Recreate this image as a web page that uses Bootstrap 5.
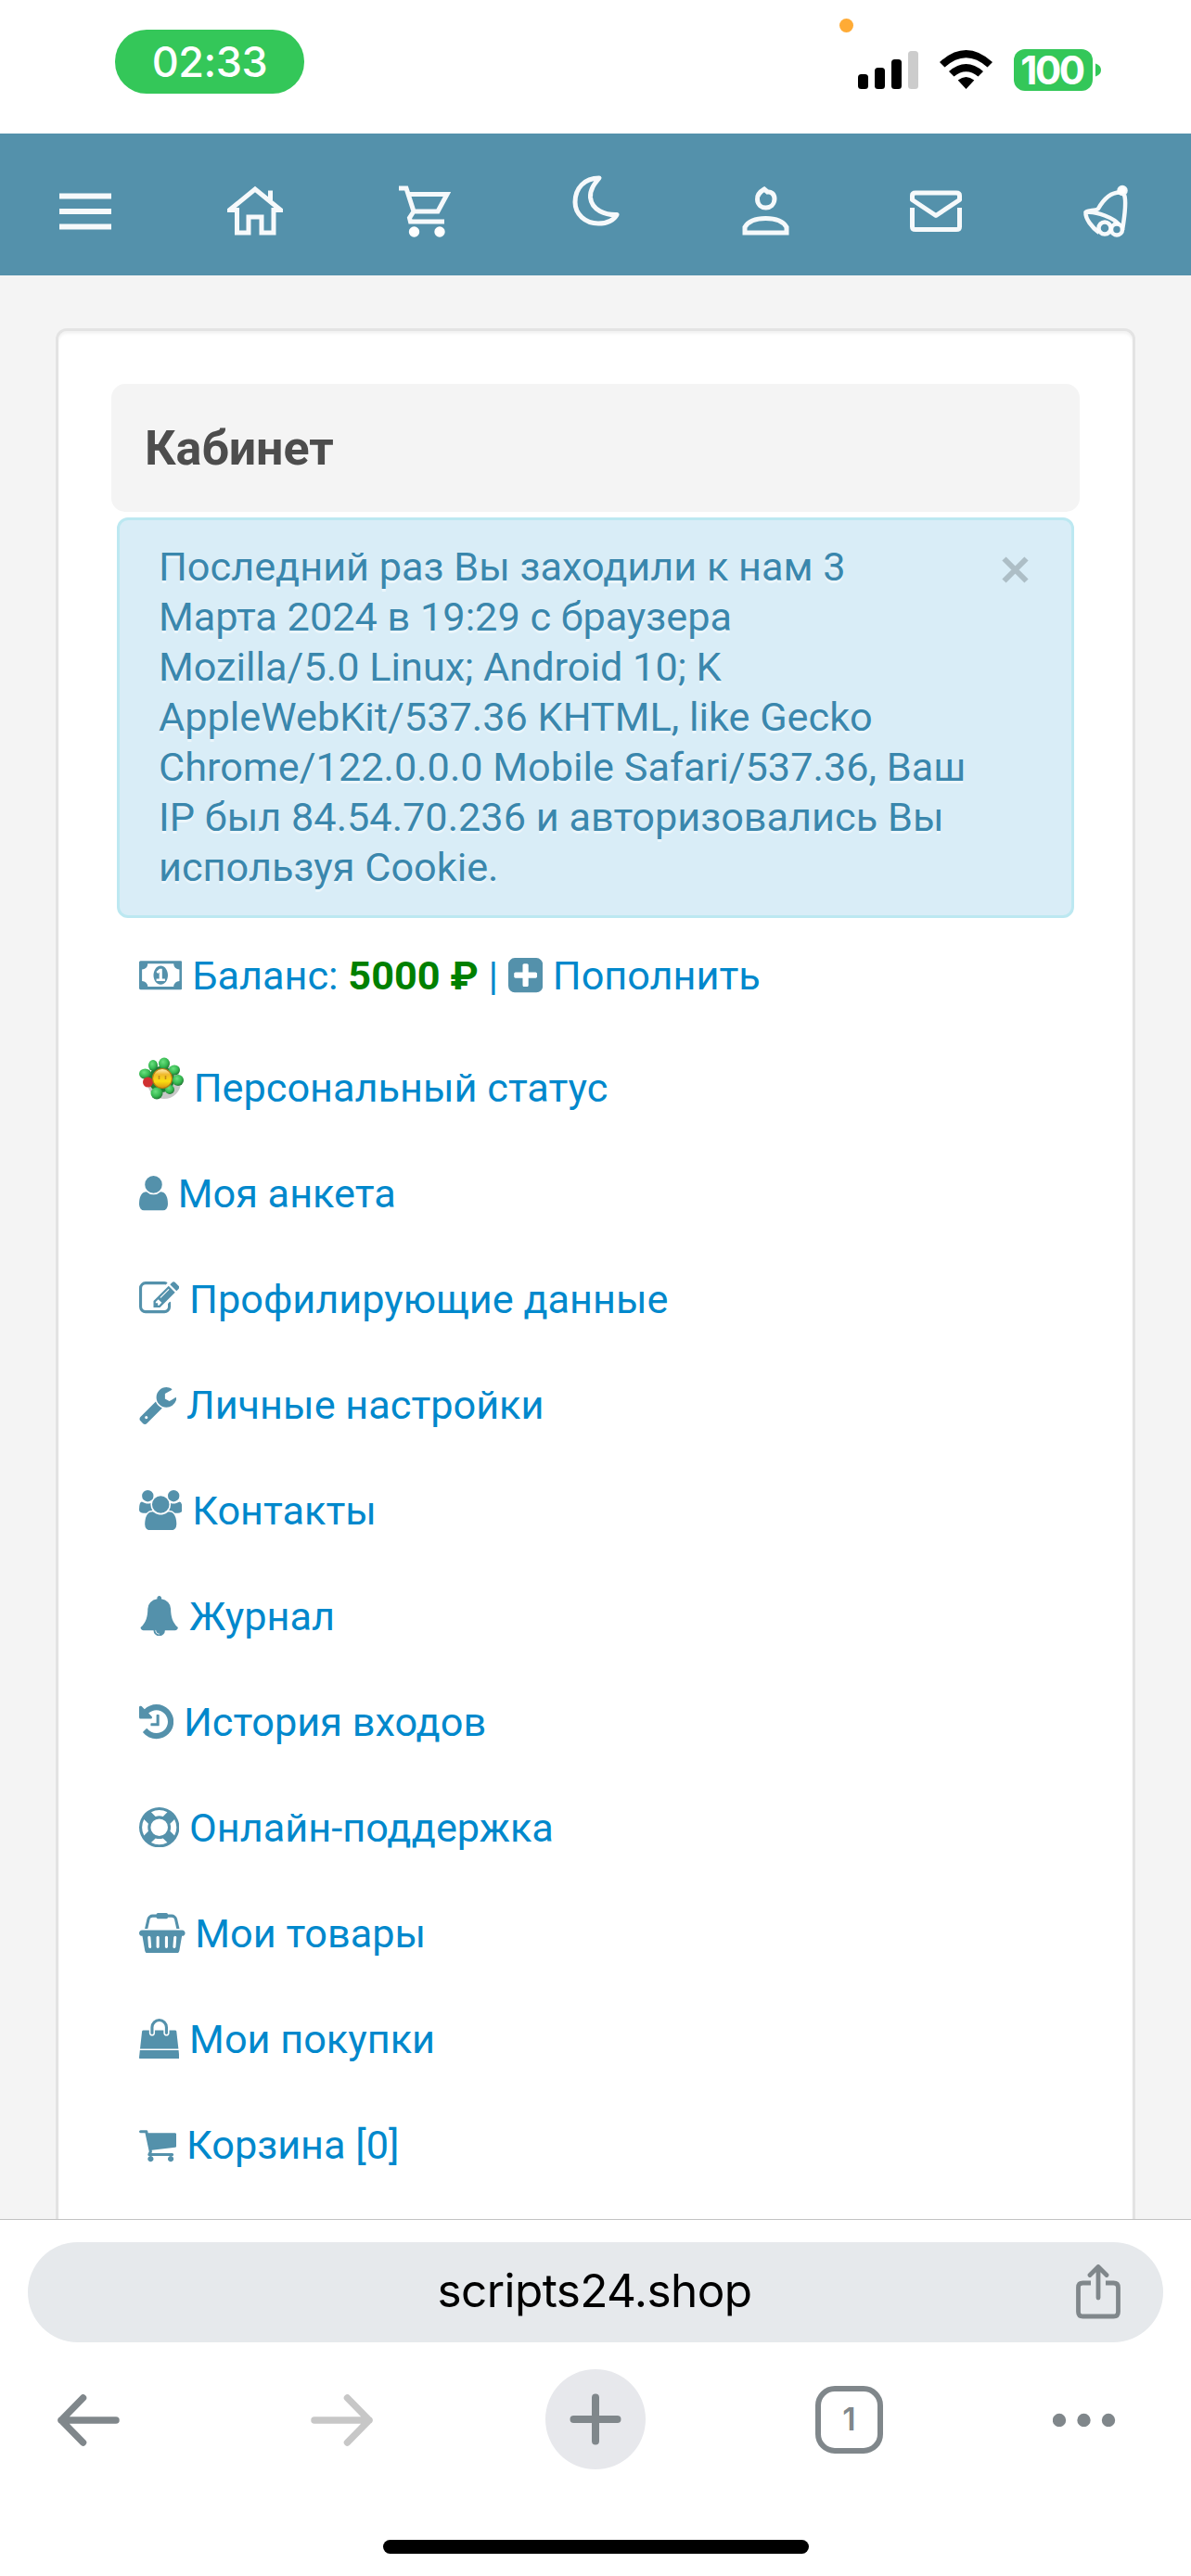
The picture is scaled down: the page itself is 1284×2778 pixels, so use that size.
<!DOCTYPE html>
<html lang="ru">
<head>
<meta charset="utf-8">
<meta name="viewport" content="width=device-width, initial-scale=1">
<title>Кабинет</title>
<link href="https://cdn.jsdelivr.net/npm/bootstrap@5.3.0/dist/css/bootstrap.min.css" rel="stylesheet">
<style>
body{width:1284px;height:2778px;overflow:hidden;background:#fff;font-family:Roboto,"Noto Sans",sans-serif;font-size:43.25px;line-height:54px}
svg{display:block}
.statusbar{height:144px;font-family:Inter,"Liberation Sans",sans-serif;padding:32px 97px 0 124px}
.time-pill{width:204px;height:69px;background:#34c759;color:#fff;border-radius:34px;font-size:45px;font-weight:500;line-height:70px;letter-spacing:-.5px}
.status-right{padding-top:21px;position:relative}
.mic-dot{position:absolute;left:-20px;top:-12px;width:15px;height:15px;background:#ffab35}
.batt{width:85px;height:45px;border-radius:12px;background:#34c759;color:#fff;font-size:42px;font-weight:700;line-height:46px;letter-spacing:-2.5px;padding-right:3px}
.topnav{height:153px;background:#5491ab;padding:15px 0 0}
.topnav svg{width:60px;height:60px;fill:none;stroke:#fff;stroke-width:5;stroke-opacity:.95}
.topnav .moon{margin-top:-24px}
.page{height:2096px;background:#f4f4f4;padding:57px 60px 0}
.well-box{height:2200px;background:#fff;border:3px solid #e3e3e3;border-radius:12px;box-shadow:inset 0 3px 3px rgba(0,0,0,.05);padding:57px}
.title-box{height:138px;border-radius:15px;background:#f4f4f4;color:#4d4d4d;font-size:52px;font-weight:700;line-height:139px;padding:0 36px;margin:0 0 6px}
.notice{margin:0 6px;border:3px solid #bce8f1;border-radius:12px;background:#d9edf7;color:#3a87ad;padding:24px 42px;height:432px;text-shadow:0 3px 0 rgba(255,255,255,.5);white-space:nowrap}
.closer{background:none;border:0;padding:0;margin:15px 4px 0 0}
.menu{margin:6px 0 0 30px;color:#08c;white-space:nowrap}
.menu li{padding:30px 0}
.menu a{color:#08c;text-decoration:none}
.menu svg{display:inline-block;height:43.4px;vertical-align:-6.2px;fill:#5491ab}
.menu svg.flower{width:48px;height:48px;vertical-align:baseline}
.sum{color:green;font-weight:700}
.browserbar{height:385px;border-top:1px solid #c2c2c2;font-family:Inter,"Liberation Sans",sans-serif}
.urlpill{height:108px;margin:24px 30px 0;background:#e6e9ec;color:#000;font-size:49.5px;line-height:104px;letter-spacing:-.6px;padding:0 46px 4px 44px}
.tools{height:108px;margin:29px 41px 0;gap:165.5px}
.tool{width:108px;height:108px}
.plusbtn{background:#e7e8ec}
.tabbox{width:73px;height:73px;border:6.5px solid #80878b;border-radius:21px;color:#80878b;font-size:34px;font-weight:600;line-height:60px}
.homebar{width:459px;height:15px;background:#000;margin:76px auto 0}
</style>
<script src="https://cdn.jsdelivr.net/npm/bootstrap@5.3.0/dist/js/bootstrap.bundle.min.js"></script>
</head>
<body>
<div class="statusbar d-flex justify-content-between align-items-start">
  <div class="time-pill text-center">02:33</div>
  <div class="status-right d-flex">
    <span class="mic-dot rounded-circle"></span>
    <svg width="168" height="45" viewBox="925 53 168 45"><g><rect x="925" y="80" width="11" height="16" rx="3.5"/><rect x="943" y="73" width="11" height="23" rx="3.5"/><rect x="961" y="64" width="11" height="32" rx="3.5"/><rect x="979" y="55" width="11" height="41" rx="3.5" fill="#ccc"/></g><path d="M1013 67Q1041.500 41 1070 67L1064.500 72.500Q1041.500 52 1018.500 72.500ZM1023 77Q1041.500 61 1060 77L1054.500 82.500Q1041.500 72 1028.500 82.500ZM1032.700 86.500Q1041.500 79.500 1050.300 86.500L1041.500 96Z"/></svg>
    <div class="batt text-center">100</div>
    <svg width="9" height="45" viewBox="0 0 9 45"><path d="M3 15.500q6 2 6 7t-6 7z" fill="#34c759"/></svg>
  </div>
</div>

<nav class="topnav d-flex align-items-center">
  <a class="col d-flex justify-content-center" href="#"><svg viewBox="0 0 60 60"><path d="M2 13.500h56M2 30h56M2 46.500h56" stroke-width="6"/></svg></a>
  <a class="col d-flex justify-content-center" href="#"><svg viewBox="0 0 60 60"><path d="M2.500 28.500 30 6 57.500 28.500H50V53H37V36H23V53H10.500V28.500ZM46.500 18V7.500"/></svg></a>
  <a class="col d-flex justify-content-center" href="#"><svg viewBox="0 0 60 60"><path d="M1 5H9L17 30 12.500 37 13.500 41H50M12 11.500H53L43 30H17"/><g fill="#fff" stroke="none"><circle cx="17.500" cy="52" r="5.700"/><circle cx="45" cy="52" r="5.700"/></g></svg></a>
  <a class="col d-flex justify-content-center moon" href="#"><svg viewBox="0 0 60 60"><path d="M34 6C18 6 8 17 8 32 8 45 19 55 33 55 43 55 50 51 53 45.500 41 46 26 41 24.500 27 24 18 29 12 34 6Z" stroke-linejoin="round"/></svg></a>
  <a class="col d-flex justify-content-center" href="#"><svg viewBox="0 0 60 60"><path d="M29 6C24 9 21 12 21.500 17 22 29 39.500 29 40 16.500 40 11 36 8.500 32.500 9ZM8 53V47C12 40 22 37.500 30.500 37.500S49 40 53 47V53Z"/></svg></a>
  <a class="col d-flex justify-content-center" href="#"><svg viewBox="0 0 60 60"><path d="M4.500 26V46.500Q4.500 49.500 8 49.500H52Q55.500 49.500 55.500 46.500V26M8 10H52Q55.500 10 55.500 13V17.500L30 34.500 4.500 17.500V13Q4.500 10 8 10Z" stroke-linejoin="round"/></svg></a>
  <a class="col d-flex justify-content-center" href="#"><svg viewBox="0 0 60 60"><g stroke-width="4.500"><path d="M50 12C53 20 50 38 48 50M46 9.500C34 9 26 20 22 27 19 30 11 28 8.500 31 8 38 15 47 23 53M8.500 31C20 29 40 38 44 44"/><circle cx="29" cy="48" r="6.500"/><circle cx="42" cy="49.500" r="6"/><circle cx="48" cy="7.500" r="3.500" fill="#fff"/></g></svg></a>
</nav>

<main class="page overflow-hidden">
  <div class="well-box">
    <h1 class="title-box">Кабинет</h1>
    <div class="notice d-flex justify-content-between align-items-start">
      <div>Последний раз Вы заходили к нам 3<br>Марта 2024 в 19:29 с браузера<br>Mozilla/5.0 Linux; Android 10; K<br>AppleWebKit/537.36 KHTML, like Gecko<br>Chrome/122.0.0.0 Mobile Safari/537.36, Ваш<br>IP был 84.54.70.236 и авторизовались Вы<br>используя Cookie.</div>
      <button class="closer" type="button" aria-label="Закрыть"><svg width="29" height="29" viewBox="0 0 29 29"><path d="M2.500 2.500 26.500 26.500M26.500 2.500 2.500 26.500" stroke="#adbec6" stroke-width="6"/></svg></button>
    </div>
    <ul class="menu list-unstyled">
      <li><a href="#"><svg viewBox="0 0 1920 1792"><path d="M768 1152h384v-96h-128v-448h-114l-148 137 77 80q42-37 55-57h2v288h-128v96zm512-256q0 70-21 142t-59.500 134-101.500 101-138 39-138-39-101.500-101-59.500-134-21-142 21-142 59.500-134 101.500-101 138-39 138 39 101.500 101 59.500 134 21 142zm512 256v-512q-106 0-181-75t-75-181h-1152q0 106-75 181t-181 75v512q106 0 181 75t75 181h1152q0-106 75-181t181-75zm128-832v1152q0 26-19 45t-45 19h-1792q-26 0-45-19t-19-45v-1152q0-26 19-45t45-19h1792q26 0 45 19t19 45z"/></svg> Баланс: <span class="sum">5000 ₽</span></a> | <a href="#"><svg viewBox="128 0 1536 1792"><path d="M1408 960v-128q0-26-19-45t-45-19h-320v-320q0-26-19-45t-45-19h-128q-26 0-45 19t-19 45v320h-320q-26 0-45 19t-19 45v128q0 26 19 45t45 19h320v320q0 26 19 45t45 19h128q26 0 45-19t19-45v-320h320q26 0 45-19t19-45zm256-544v960q0 119-84.500 203.500t-203.500 84.500h-960q-119 0-203.500-84.500t-84.500-203.500v-960q0-119 84.500-203.500t203.500-84.500h960q119 0 203.500 84.500t84.500 203.500z"/></svg> Пополнить</a></li>
      <li><a href="#"><svg class="flower" viewBox="0 0 48 48"><defs><radialGradient id="leaf" cx=".4" cy=".35" r=".7"><stop offset="0" stop-color="#6be080"/><stop offset=".6" stop-color="#35b850"/><stop offset="1" stop-color="#1d6b2e"/></radialGradient><linearGradient id="face" x1="0" y1="0" x2="0" y2="1"><stop offset="0" stop-color="#fff0c0"/><stop offset=".3" stop-color="#f0b92c"/><stop offset=".65" stop-color="#fbdf10"/><stop offset="1" stop-color="#d89410"/></linearGradient></defs><circle cx="27" cy="27" r="18" opacity=".22" fill="#000"/><g fill="url(#leaf)"><circle cx="24" cy="24" r="14" fill="#1d7f35"/><ellipse cx="27" cy="7" rx="6" ry="6.500"/><ellipse cx="15" cy="9" rx="5" ry="6"/><ellipse cx="6.500" cy="18" rx="6.500" ry="5.500"/><ellipse cx="38" cy="14" rx="6" ry="5.500"/><ellipse cx="42" cy="25" rx="6" ry="6"/><ellipse cx="33" cy="35" rx="5" ry="5"/><ellipse cx="19" cy="39" rx="6.500" ry="6.500"/></g><circle cx="9.500" cy="27" r="5.500" fill="#cf3030"/><circle cx="25" cy="23" r="10.500" fill="url(#face)" stroke="#b97b10" stroke-width="1.200"/><path d="M21.500 20v4M28.500 20v4" stroke="#c08a18" stroke-width="1.600"/></svg> Персональный статус</a></li>
      <li><a href="#"><svg viewBox="256 0 1280 1792"><path d="M1536 1399q0 109-62.500 187t-150.500 78h-854q-88 0-150.500-78t-62.500-187q0-85 8.500-160.500t31.500-152 58.500-131 94-89 134.500-34.500q131 128 313 128t313-128q76 0 134.500 34.500t94 89 58.500 131 31.500 152 8.500 160.500zm-256-887q0 159-112.500 271.500t-271.500 112.500-271.500-112.500-112.500-271.500 112.500-271.500 271.500-112.500 271.500 112.500 112.500 271.500z"/></svg> Моя анкета</a></li>
      <li><a href="#"><svg viewBox="0 0 1792 1792"><path d="M888 1184l116-116-152-152-116 116v56h96v96h56zm440-720q-16-16-33 1l-350 350q-17 17-1 33t33-1l350-350q17-17 1-33zm80 594v190q0 119-84.500 203.500t-203.500 84.500h-832q-119 0-203.500-84.500t-84.500-203.500v-832q0-119 84.500-203.500t203.500-84.500h832q63 0 117 25 15 7 18 23 3 17-9 29l-49 49q-14 14-32 8-23-6-45-6h-832q-66 0-113 47t-47 113v832q0 66 47 113t113 47h832q66 0 113-47t47-113v-126q0-13 9-22l64-64q15-15 35-7t20 29zm-96-738l288 288-672 672h-288v-288zm444 132l-92 92-288-288 92-92q28-28 68-28t68 28l152 152q28 28 28 68t-28 68z"/></svg> Профилирующие данные</a></li>
      <li><a href="#"><svg viewBox="64 0 1664 1792"><path d="M448 1472q0-26-19-45t-45-19-45 19-19 45 19 45 45 19 45-19 19-45zm644-420l-682 682q-37 37-90 37-52 0-91-37l-106-108q-38-36-38-90 0-53 38-91l681-681q39 98 114.500 173.500t173.500 114.500zm634-435q0 39-23 106-47 134-164.500 217.500t-258.500 83.500q-185 0-316.500-131.500t-131.500-316.500 131.500-316.500 316.500-131.500q58 0 121.500 16.500t107.500 46.500q16 11 16 28t-16 28l-293 169v224l193 107q5-3 79-48.500t135.500-81 70.500-35.500q15 0 23.500 10t8.500 25z"/></svg> Личные настройки</a></li>
      <li><a href="#"><svg viewBox="0 0 1920 1792"><path d="M593 896q-162 5-265 128h-134q-82 0-138-40.500t-56-118.500q0-353 124-353 6 0 43.500 21t97.500 42.500 119 21.500q67 0 133-23-5 37-5 66 0 139 81 256zm1071 637q0 120-73 189.500t-194 69.500h-874q-121 0-194-69.500t-73-189.500q0-53 3.500-103.500t14-109 26.500-108.500 43-97.500 62-81 85.500-53.500 111.500-20q10 0 43 21.500t73 48 107 48 135 21.500 135-21.500 107-48 73-48 43-21.500q61 0 111.500 20t85.500 53.500 62 81 43 97.500 26.500 108.500 14 109 3.500 103.500zm-1024-1277q0 106-75 181t-181 75-181-75-75-181 75-181 181-75 181 75 75 181zm704 384q0 159-112.500 271.500t-271.500 112.500-271.500-112.500-112.500-271.500 112.500-271.500 271.500-112.500 271.500 112.500 112.500 271.500zm576 225q0 78-56 118.500t-138 40.500h-134q-103-123-265-128 81-117 81-256 0-29-5-66 66 23 133 23 59 0 119-21.500t97.500-42.500 43.500-21q124 0 124 353zm-128-609q0 106-75 181t-181 75-181-75-75-181 75-181 181-75 181 75 75 181z"/></svg> Контакты</a></li>
      <li><a href="#"><svg viewBox="0 0 1792 1792"><path d="M912 1696q0-16-16-16-59 0-101.500-42.500t-42.500-101.500q0-16-16-16t-16 16q0 73 51.500 124.500t124.500 51.500q16 0 16-16zm816-288q0 52-38 90t-90 38h-448q0 106-75 181t-181 75-181-75-75-181h-448q-52 0-90-38t-38-90q50-42 91-88t85-119.500 74.500-158.500 50-206 19.500-260q0-152 117-282.500t307-158.500q-8-19-8-39 0-40 28-68t68-28 68 28 28 68q0 20-8 39 190 28 307 158.500t117 282.500q0 139 19.500 260t50 206 74.500 158.500 85 119.500 91 88z"/></svg> Журнал</a></li>
      <li><a href="#"><svg viewBox="128 0 1536 1792"><path d="M1664 896q0 156-61 298t-164 245-245 164-298 61q-172 0-327-72.500t-264-204.500q-7-10-6.500-22.500t8.500-20.500l137-138q10-9 25-9 16 2 23 12 73 95 179 147t225 52q104 0 198.500-40.500t163.500-109.500 109.500-163.500 40.500-198.500-40.500-198.500-109.500-163.500-163.500-109.500-198.500-40.500q-98 0-188 35.500t-160 101.500l137 138q31 30 14 69-17 40-59 40h-448q-26 0-45-19t-19-45v-448q0-42 40-59 39-17 69 14l130 129q107-101 244.500-156.500t284.500-55.500q156 0 298 61t245 164 164 245 61 298zm-640-288v448q0 14-9 23t-23 9h-320q-14 0-23-9t-9-23v-64q0-14 9-23t23-9h224v-352q0-14 9-23t23-9h64q14 0 23 9t9 23z"/></svg> История входов</a></li>
      <li><a href="#"><svg viewBox="0 0 1792 1792"><path d="M896 0q182 0 348 71t286 191 191 286 71 348-71 348-191 286-286 191-348 71-348-71-286-191-191-286-71-348 71-348 191-286 286-191 348-71zm0 128q-190 0-361 90l194 194q82-28 167-28t167 28l194-194q-171-90-361-90zm-678 1129l194-194q-28-82-28-167t28-167l-194-194q-90 171-90 361t90 361zm678 407q190 0 361-90l-194-194q-82 28-167 28t-167-28l-194 194q171 90 361 90zm0-384q159 0 271.500-112.500t112.500-271.500-112.500-271.500-271.500-112.500-271.500 112.500-112.500 271.500 112.500 271.500 271.500 112.500zm484-217l194 194q90-171 90-361t-90-361l-194 194q28 82 28 167t-28 167z"/></svg> Онлайн-поддержка</a></li>
      <li><a href="#"><svg viewBox="0 0 2048 1792"><path d="M1920 768q53 0 90.500 37.500t37.500 90.500-37.500 90.500-90.500 37.500h-15l-115 662q-8 46-44 76t-82 30h-1280q-46 0-82-30t-44-76l-115-662h-15q-53 0-90.500-37.500t-37.500-90.500 37.500-90.500 90.500-37.500h1792zm-1435 800q26-2 43.500-22.500t15.500-46.500l-32-416q-2-26-22.500-43.500t-46.500-15.500-43.500 22.500-15.500 46.500l32 416q2 25 20.500 42t43.500 17h5zm411-64v-416q0-26-19-45t-45-19-45 19-19 45v416q0 26 19 45t45 19 45-19 19-45zm384 0v-416q0-26-19-45t-45-19-45 19-19 45v416q0 26 19 45t45 19 45-19 19-45zm352 5l32-416q2-26-15.500-46.500t-43.500-22.500-46.500 15.500-22.500 43.500l-32 416q-2 26 15.500 46.500t43.500 22.500h5q25 0 43.500-17t20.500-42zm-1156-1217l-93 412h-132l101-441q19-88 89-143.500t160-55.500h167q0-26 19-45t45-19h384q26 0 45 19t19 45h167q90 0 160 55.500t89 143.500l101 441h-132l-93-412q-11-44-45.500-72t-79.500-28h-167q0 26-19 45t-45 19h-384q-26 0-45-19t-19-45h-167q-45 0-79.500 28t-45.500 72z"/></svg> Мои товары</a></li>
      <li><a href="#"><svg viewBox="0 0 1792 1792"><path d="M1757 1408l35 313q3 28-16 50-19 21-48 21h-1664q-29 0-48-21-19-22-16-50l35-313h1722zm-93-839l86 775h-1708l86-775q3-24 21-40.500t43-16.500h256v128q0 53 37.500 90.500t90.500 37.500 90.500-37.500 37.500-90.500v-128h384v128q0 53 37.500 90.500t90.500 37.500 90.500-37.500 37.500-90.500v-128h256q25 0 43 16.500t21 40.500zm-384-185v256q0 26-19 45t-45 19-45-19-19-45v-256q0-106-75-181t-181-75-181 75-75 181v256q0 26-19 45t-45 19-45-19-19-45v-256q0-159 112.500-271.500t271.500-112.500 271.500 112.500 112.500 271.500z"/></svg> Мои покупки</a></li>
      <li><a href="#"><svg viewBox="64 0 1664 1792"><path d="M704 1536q0 52-38 90t-90 38-90-38-38-90 38-90 90-38 90 38 38 90zm896 0q0 52-38 90t-90 38-90-38-38-90 38-90 90-38 90 38 38 90zm128-1088v512q0 24-16.500 42.500t-40.500 21.500l-1044 122q13 60 13 70 0 16-24 64h920q26 0 45 19t19 45-19 45-45 19h-1024q-26 0-45-19t-19-45q0-11 8-31.500t16-36 21.500-40 15.500-29.500l-177-823h-204q-26 0-45-19t-19-45 19-45 45-19h256q16 0 28.500 6.500t19.500 15.500 13 24.500 8 26 5.500 29.500 4.500 26h1201q26 0 45 19t19 45z"/></svg> Корзина [0]</a></li>
    </ul>
  </div>
</main>

<footer class="browserbar">
  <div class="urlpill rounded-pill d-flex align-items-center">
    <span class="flex-fill text-center ps-5">scripts24.shop</span>
    <svg class="mt-1" width="48" height="60" viewBox="0 0 48 60" fill="none" stroke="#80878b" stroke-width="4.800" stroke-linecap="round" stroke-linejoin="round"><path d="M16 20H7.500Q2.500 20 2.500 25V51Q2.500 56 7.500 56H40.500Q45.500 56 45.500 51V25Q45.500 20 40.500 20H32" stroke-linecap="butt"/><path d="M24 36V3M15 11.500 24 2.500 33 11.500"/></svg>
  </div>
  <div class="tools d-flex">
    <div class="tool d-flex align-items-center justify-content-center"><svg width="70" height="60" viewBox="0 0 70 60" fill="none" stroke="#80878b" stroke-width="7.500" stroke-linecap="round" stroke-linejoin="round"><path d="M65 31H6M29.500 7 6 31 29.500 55"/></svg></div>
    <div class="tool d-flex align-items-center justify-content-center"><svg width="70" height="60" viewBox="0 0 70 60" fill="none" stroke="#c7c7c7" stroke-width="7.500" stroke-linecap="round" stroke-linejoin="round"><path d="M5 31H64M40.500 7 64 31 40.500 55"/></svg></div>
    <div class="tool plusbtn rounded-circle d-flex align-items-center justify-content-center"><svg width="56" height="56" viewBox="0 0 56 56" stroke="#80878b" stroke-width="8" stroke-linecap="round"><path d="M4.500 28H51.500M28 4.500V51.500"/></svg></div>
    <div class="tool d-flex align-items-center justify-content-center"><div class="tabbox text-center">1</div></div>
    <div class="tool d-flex align-items-center"><svg width="68" height="16" viewBox="2 0 68 16" fill="#80878b"><circle cx="9" cy="9" r="7.200"/><circle cx="35.500" cy="9" r="7.200"/><circle cx="62" cy="9" r="7.200"/></svg></div>
  </div>
  <div class="homebar rounded-pill"></div>
</footer>
</body>
</html>
